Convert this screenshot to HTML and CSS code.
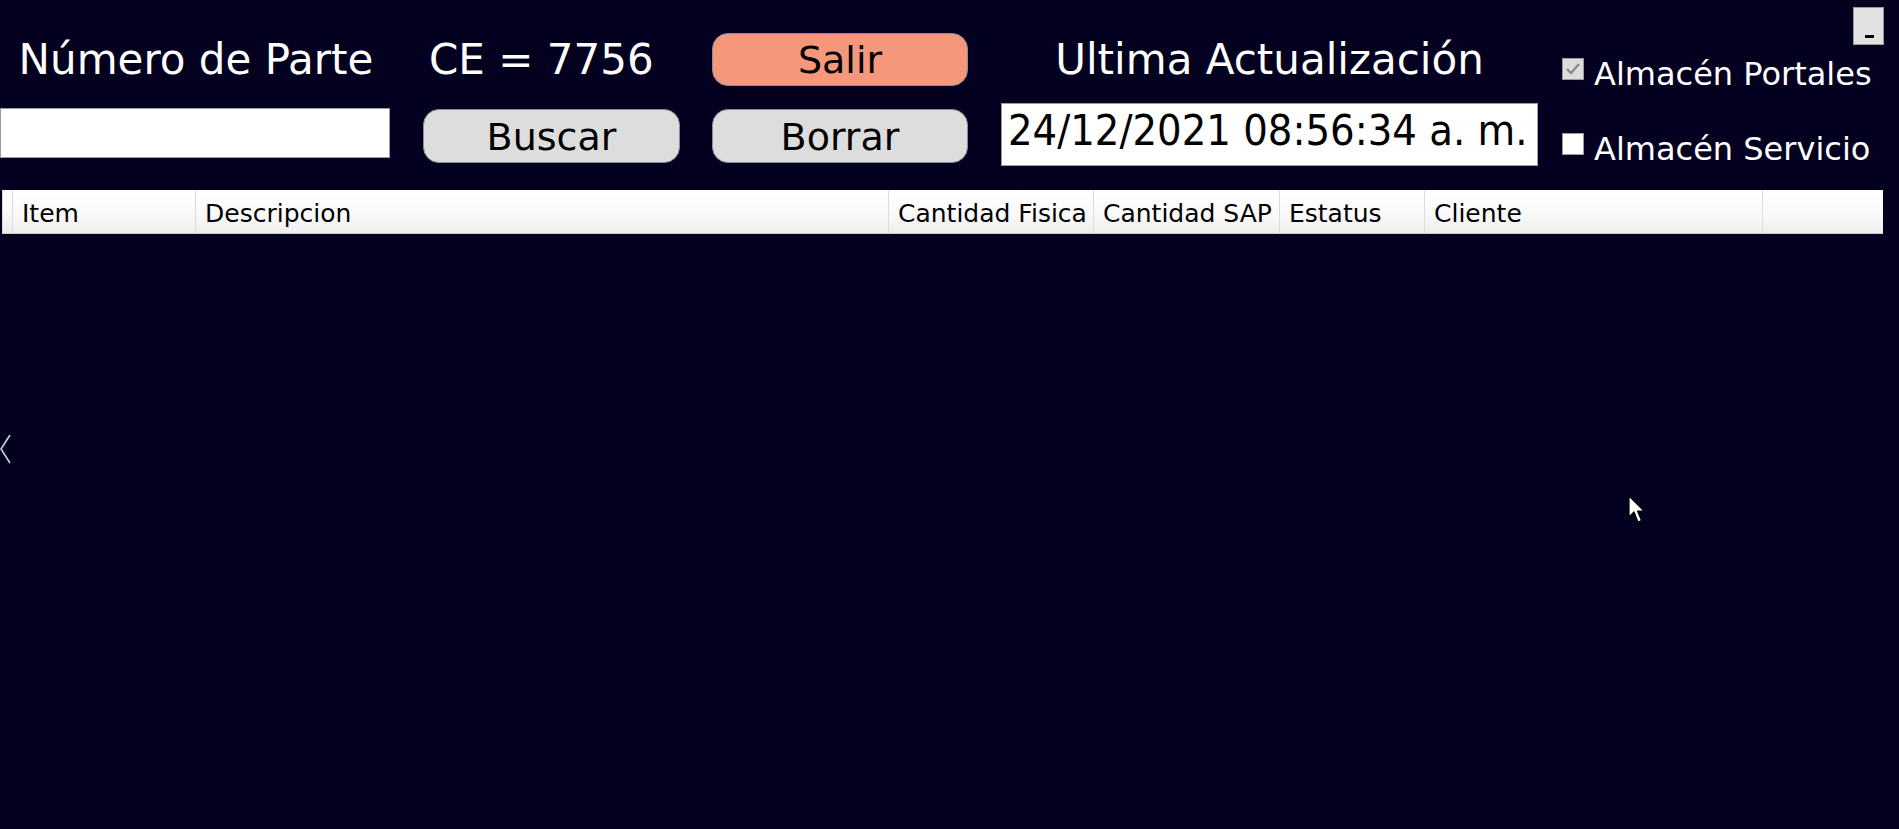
FILE: index.html
```html
<!DOCTYPE html>
<html lang="es">
<head>
<meta charset="utf-8">
<title>Número de Parte</title>
<link rel="stylesheet" href="styles.css">
</head>
<body>
<div class="app">
  <div class="top">
    <div class="label label-parte">Número de Parte</div>
    <div class="label label-ce">CE = 7756</div>
    <button class="btn btn-salir">Salir</button>
    <div class="label label-ultima">Ultima Actualización</div>
    <div class="checks">
      <div class="check-row">
        <span class="box box-checked">
          <svg viewBox="0 0 22 22" width="22" height="22"><polyline points="5,11 9,15 17,6" fill="none" stroke="#8a8a8a" stroke-width="2.4"/></svg>
        </span>
        <span class="check-label">Almacén Portales</span>
      </div>
      <div class="check-row">
        <span class="box"></span>
        <span class="check-label">Almacén Servicio</span>
      </div>
    </div>
    <div class="input-parte"></div>
    <button class="btn btn-buscar">Buscar</button>
    <button class="btn btn-borrar">Borrar</button>
    <div class="date-box">24/12/2021 08:56:34 a. m.</div>
  </div>

  <div class="grid-header">
    <div class="cell cell-row"></div>
    <div class="cell c-item">Item</div>
    <div class="cell c-desc">Descripcion</div>
    <div class="cell c-cf">Cantidad Fisica</div>
    <div class="cell c-csap">Cantidad SAP</div>
    <div class="cell c-est">Estatus</div>
    <div class="cell c-cli">Cliente</div>
    <div class="cell c-rest"></div>
  </div>

  <button class="minimize"><span class="dash"></span></button>

  <svg class="chevron" viewBox="0 0 12 32" width="12" height="32">
    <polyline points="10,1 1,15 10,29" fill="none" stroke="#cfcfd6" stroke-width="1.6"/>
  </svg>

  <svg class="cursor" viewBox="0 0 20 30" width="20" height="30">
    <path d="M1,1 L1,22 L6,17 L10,27 L13.5,25.5 L9.5,16 L16,16 Z" fill="#ffffff" stroke="#000000" stroke-width="1.2" stroke-linejoin="round"/>
  </svg>
</div>
</body>
</html>
```

FILE: styles.css
```css
html, body {
  margin: 0;
  padding: 0;
}

body {
  background: #030020;
  width: 1899px;
  height: 829px;
  overflow: hidden;
  font-family: "DejaVu Sans", "Liberation Sans", sans-serif;
}

.app {
  position: relative;
  width: 1899px;
  height: 829px;
}

.top {
  display: grid;
  grid-template-columns: 423px 289px 289px 561px 1fr;
  grid-template-rows: 53px 63px;
  row-gap: 17px;
  padding-top: 33px;
}

.label {
  color: #ffffff;
  font-size: 42px;
  line-height: 53px;
  white-space: nowrap;
}

.label-parte {
  grid-column: 1;
  grid-row: 1;
  width: 390px;
  text-align: center;
  padding-left: 2px;
  box-sizing: border-box;
}

.label-ce {
  grid-column: 2;
  grid-row: 1;
  padding-left: 6px;
}

.label-ultima {
  grid-column: 4;
  grid-row: 1;
  width: 537px;
  text-align: center;
}

.btn {
  font-family: "DejaVu Sans", "Liberation Sans", sans-serif;
  font-size: 38px;
  color: #000000;
  border: 1px solid #8d8d98;
  border-radius: 16px;
  background: #dddddd;
  padding: 0;
  width: 257px;
  margin: 0;
}

.btn-salir {
  grid-column: 3;
  grid-row: 1;
  width: 256px;
  height: 53px;
  background: #f5977b;
  line-height: 50px;
  padding-top: 1px;
}

.btn-buscar {
  grid-column: 2;
  grid-row: 2;
  align-self: start;
  margin-top: 6px;
  height: 54px;
  line-height: 54px;
  padding-top: 0;
}

.btn-borrar {
  grid-column: 3;
  grid-row: 2;
  width: 256px;
  align-self: start;
  margin-top: 6px;
  height: 54px;
  line-height: 54px;
  padding-top: 0;
}

.input-parte {
  grid-column: 1;
  grid-row: 2;
  align-self: start;
  margin-top: 5px;
  width: 390px;
  height: 50px;
  box-sizing: border-box;
  background: #ffffff;
  border: 1px solid #9a9aae;
}

.date-box {
  grid-column: 4;
  grid-row: 2;
  width: 537px;
  height: 63px;
  box-sizing: border-box;
  background: #ffffff;
  border: 1px solid #9a9aae;
  font-family: "DejaVu Sans Condensed", "DejaVu Sans", sans-serif;
  font-stretch: condensed;
  font-size: 43px;
  line-height: 53px;
  color: #000000;
  padding-left: 6px;
  white-space: nowrap;
  overflow: hidden;
}

.checks {
  grid-column: 5;
  grid-row: 1 / 3;
  display: flex;
  flex-direction: column;
  gap: 44px;
  padding-top: 26px;
}

.check-row {
  display: flex;
  align-items: flex-start;
  gap: 10px;
  height: 31px;
}

.box {
  width: 22px;
  height: 22px;
  box-sizing: border-box;
  background: #ffffff;
  border: 1px solid #9a9a9a;
  display: block;
  flex: none;
  margin-top: -1px;
}

.box svg {
  display: block;
  margin: -1px;
}

.box-checked {
  background: #dcdcdc;
}

.check-label {
  color: #ffffff;
  font-size: 32px;
  line-height: 31px;
  white-space: nowrap;
}

.grid-header {
  display: flex;
  margin-top: 24px;
  margin-left: 2px;
  width: 1881px;
  height: 44px;
  box-sizing: border-box;
  background: linear-gradient(#ffffff 0%, #fbfbfb 50%, #eeeeee 100%);
  border-bottom: 1px solid #c9c9d2;
}

.cell {
  box-sizing: border-box;
  height: 43px;
  border-right: 1px solid #dcdcdc;
  font-size: 25px;
  line-height: 40px;
  padding-top: 4px;
  color: #000000;
  padding-left: 9px;
  white-space: nowrap;
  overflow: hidden;
  flex: none;
}

.cell-row { width: 11px; padding: 0; border-left: 1px solid #dcdcdc; }
.c-item { width: 183px; }
.c-desc { width: 693px; }
.c-cf { width: 205px; }
.c-csap { width: 186px; }
.c-est { width: 145px; }
.c-cli { width: 338px; }
.c-rest { width: 120px; border-right: none; }

.minimize {
  position: absolute;
  top: 7px;
  right: 15px;
  width: 31px;
  height: 38px;
  padding: 0;
  margin: 0;
  background: #e2e2e2;
  border: 1px solid #9a9a9a;
}

.minimize .dash {
  position: absolute;
  left: 11px;
  top: 27px;
  width: 9px;
  height: 3px;
  background: #000000;
}

.chevron {
  position: absolute;
  left: 0;
  top: 434px;
}

.cursor {
  position: absolute;
  left: 1628px;
  top: 495px;
}
```
